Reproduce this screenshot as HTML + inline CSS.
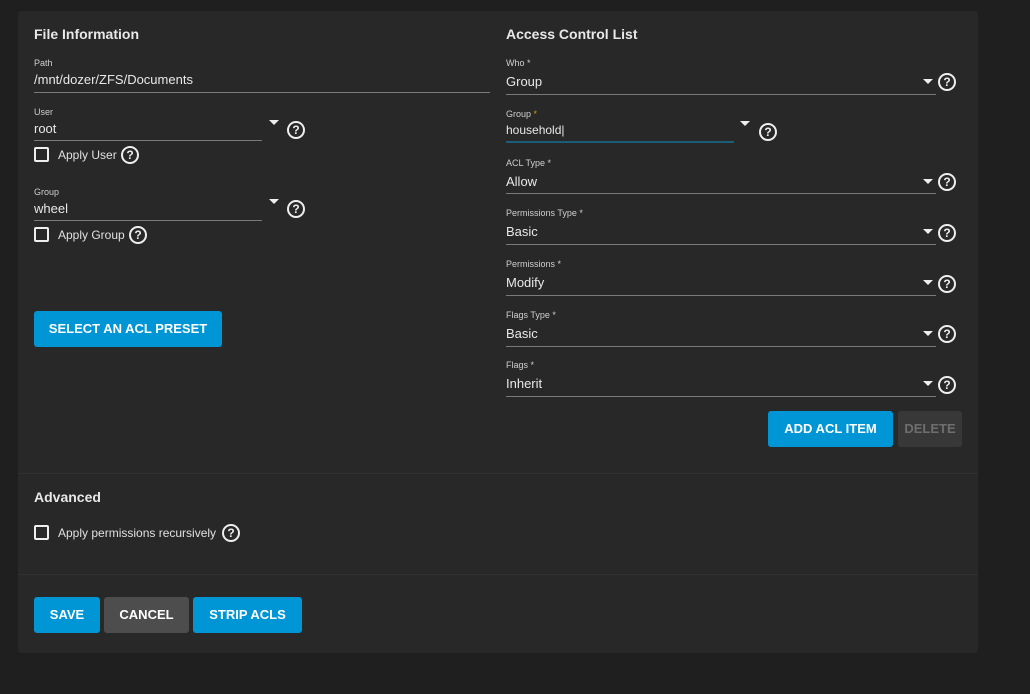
<!DOCTYPE html>
<html><head><meta charset="utf-8"><style>
*{margin:0;padding:0;box-sizing:border-box}
body{width:1030px;height:694px;background:#1f1f1f;font-family:"Liberation Sans",sans-serif;color:#e6e6e6;position:relative;overflow:hidden}
.card{position:absolute;left:18px;top:11px;width:960px;height:642px;background:#282828;border-radius:4px}
.a{position:absolute;white-space:nowrap}
.h{font-size:14px;font-weight:bold;color:#e8e8e8}
.l{font-size:9px;color:#cfcfcf}
.v{font-size:13px;color:#e8e8e8}
.ln{position:absolute;height:1px;background:#7a7a7a}
.ar{position:absolute;width:0;height:0;border-left:5px solid transparent;border-right:5px solid transparent;border-top:5px solid #eee}
.q{position:absolute;width:18px;height:18px;border:2px solid #eee;border-radius:50%;font-size:12px;font-weight:bold;text-align:center;line-height:14px;color:#eee}
.cb{position:absolute;width:15px;height:15px;border:2px solid #eee;border-radius:2px}
.cl{font-size:12px;color:#e0e0e0}
.b{position:absolute;height:36px;border-radius:3px;background:#0095d5;color:#fff;font-size:13px;font-weight:bold;text-align:center;line-height:36px}
.div{position:absolute;left:18px;width:960px;height:1px;background:#303030}
.st{color:#c9a000}
</style></head><body>
<div class="card"></div>
<div class="div" style="top:473px"></div>
<div class="div" style="top:574px"></div>

<div class="a h" style="left:34px;top:26px">File Information</div>
<div class="a l" style="left:34px;top:58px">Path</div>
<div class="a v" style="left:34px;top:72px">/mnt/dozer/ZFS/Documents</div>
<div class="ln" style="left:34px;top:92px;width:456px"></div>

<div class="a l" style="left:34px;top:107px">User</div>
<div class="a v" style="left:34px;top:121px">root</div>
<div class="ln" style="left:34px;top:140px;width:228px"></div>
<div class="ar" style="left:269px;top:120px"></div>
<div class="q" style="left:287px;top:121px">?</div>
<div class="cb" style="left:34px;top:147px"></div>
<div class="a cl" style="left:58px;top:148px">Apply User</div>
<div class="q" style="left:121px;top:146px">?</div>

<div class="a l" style="left:34px;top:187px">Group</div>
<div class="a v" style="left:34px;top:201px">wheel</div>
<div class="ln" style="left:34px;top:220px;width:228px"></div>
<div class="ar" style="left:269px;top:199px"></div>
<div class="q" style="left:287px;top:200px">?</div>
<div class="cb" style="left:34px;top:227px"></div>
<div class="a cl" style="left:58px;top:228px">Apply Group</div>
<div class="q" style="left:129px;top:226px">?</div>

<div class="b" style="left:34px;top:311px;width:188px">SELECT AN ACL PRESET</div>

<div class="a h" style="left:506px;top:26px">Access Control List</div>

<div class="a l" style="left:506px;top:58px">Who *</div>
<div class="a v" style="left:506px;top:74px">Group</div>
<div class="ln" style="left:506px;top:94px;width:430px"></div>
<div class="ar" style="left:923px;top:79px"></div>
<div class="q" style="left:938px;top:73px">?</div>

<div class="a l" style="left:506px;top:109px">Group <span class="st">*</span></div>
<div class="a v" style="left:506px;top:123px;font-size:12px">household|</div>
<div class="ln" style="left:506px;top:141px;width:228px;height:2px;background:#1b5d78"></div>
<div class="ar" style="left:740px;top:121px"></div>
<div class="q" style="left:759px;top:123px">?</div>

<div class="a l" style="left:506px;top:158px">ACL Type *</div>
<div class="a v" style="left:506px;top:174px">Allow</div>
<div class="ln" style="left:506px;top:193px;width:430px"></div>
<div class="ar" style="left:923px;top:179px"></div>
<div class="q" style="left:938px;top:173px">?</div>

<div class="a l" style="left:506px;top:208px">Permissions Type *</div>
<div class="a v" style="left:506px;top:224px">Basic</div>
<div class="ln" style="left:506px;top:244px;width:430px"></div>
<div class="ar" style="left:923px;top:229px"></div>
<div class="q" style="left:938px;top:224px">?</div>

<div class="a l" style="left:506px;top:259px">Permissions *</div>
<div class="a v" style="left:506px;top:275px">Modify</div>
<div class="ln" style="left:506px;top:295px;width:430px"></div>
<div class="ar" style="left:923px;top:280px"></div>
<div class="q" style="left:938px;top:275px">?</div>

<div class="a l" style="left:506px;top:310px">Flags Type *</div>
<div class="a v" style="left:506px;top:326px">Basic</div>
<div class="ln" style="left:506px;top:346px;width:430px"></div>
<div class="ar" style="left:923px;top:331px"></div>
<div class="q" style="left:938px;top:325px">?</div>

<div class="a l" style="left:506px;top:360px">Flags *</div>
<div class="a v" style="left:506px;top:376px">Inherit</div>
<div class="ln" style="left:506px;top:396px;width:430px"></div>
<div class="ar" style="left:923px;top:381px"></div>
<div class="q" style="left:938px;top:376px">?</div>

<div class="b" style="left:768px;top:411px;width:125px">ADD ACL ITEM</div>
<div class="b" style="left:898px;top:411px;width:64px;background:#383838;color:#6e6e6e">DELETE</div>

<div class="a h" style="left:34px;top:489px">Advanced</div>
<div class="cb" style="left:34px;top:525px"></div>
<div class="a cl" style="left:58px;top:526px">Apply permissions recursively</div>
<div class="q" style="left:222px;top:524px">?</div>

<div class="b" style="left:34px;top:597px;width:66px">SAVE</div>
<div class="b" style="left:104px;top:597px;width:85px;background:#4d4d4d">CANCEL</div>
<div class="b" style="left:193px;top:597px;width:109px">STRIP ACLS</div>
</body></html>
